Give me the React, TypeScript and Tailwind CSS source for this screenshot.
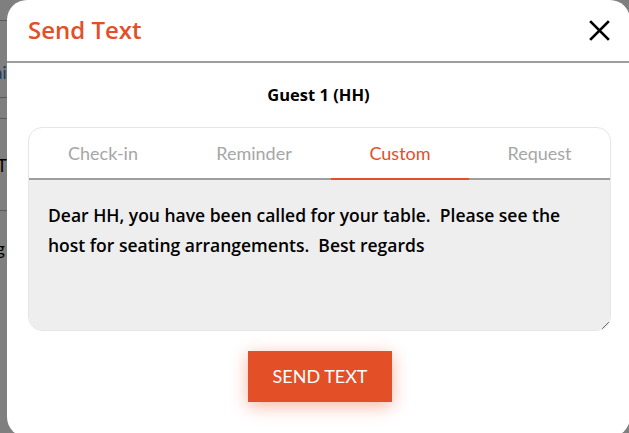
import React from "react";

const msg =
  "Dear HH, you have been called for your table.  Please see the host for seating arrangements.  Best regards";

export default function App() {
  return (
    <div
      className="relative w-[629px] h-[433px] overflow-hidden bg-[#7f7f7f]"
      style={{ fontFamily: "Lato, 'Noto Sans', sans-serif" }}
    >
      {/* background page remnants */}
      <div className="absolute left-0 top-0 w-[8px] h-full">
        <div className="absolute left-0 top-[20px] w-full h-px bg-[#5a5a5a]" />
        <div className="absolute left-0 top-[97px] w-full h-px bg-[#5a5a5a]" />
        <div className="absolute left-0 top-[118px] w-full h-px bg-[#5a5a5a]" />
        <div className="absolute left-0 top-[210px] w-full h-px bg-[#5a5a5a]" />
        <div className="absolute left-[-6px] top-[60px] text-[17px] text-[#1d3a5a]">ai</div>
        <div className="absolute left-[-3px] top-[153px] text-[17px] text-black">T</div>
        <div className="absolute left-[-4px] top-[236px] text-[17px] text-black">g</div>
      </div>

      {/* dialog */}
      <div className="absolute left-[7px] top-0 w-[623px] h-[437px] bg-white rounded-[20px] flex flex-col">
        <div className="h-[63px] shrink-0 flex items-center justify-between pl-[21px] pr-[20px] border-b-2 border-[#9e9e9e]">
          <div
            className="text-[24px] font-semibold text-[#e34f27] leading-none pb-[2px]"
            style={{ fontFamily: "'Open Sans', sans-serif" }}
          >
            Send Text
          </div>
          <svg width="21" height="21" viewBox="0 0 20 20" className="mt-[-1px]">
            <path d="M2 2 L18 18 M18 2 L2 18" stroke="#000" strokeWidth="2.6" strokeLinecap="square" />
          </svg>
        </div>
        <div
          className="pt-[20px] text-center text-[16.5px] font-bold text-black leading-[24px]"
          style={{ fontFamily: "'Open Sans', sans-serif" }}
        >
          Guest 1 (HH)
        </div>
        <div className="mt-[20px] ml-[21px] w-[583px] h-[204px] rounded-[14px] border border-[#e6e6e6] flex flex-col overflow-hidden">
          <div className="flex h-[52px] shrink-0 border-b-2 border-[#9e9e9e] text-[18px] text-[#a6a6a6]">
            <div className="w-[148px] flex items-center justify-center">Check-in</div>
            <div className="w-[154px] flex items-center justify-center">Reminder</div>
            <div className="w-[138px] flex items-center justify-center text-[#e34f27] border-b-2 border-[#e34f27] mb-[-2px]">
              Custom
            </div>
            <div className="w-[141px] flex items-center justify-center">Request</div>
          </div>
          <textarea
            readOnly
            value={msg}
            className="flex-1 w-full bg-[#eeeeee] resize-y outline-none pl-[19px] pr-[20px] pt-[20px] text-[17.5px] font-semibold leading-[30px] text-black"
            style={{ fontFamily: "'Open Sans', sans-serif" }}
          />
        </div>
        <div className="flex justify-center mt-[20px]">
          <button className="w-[144px] h-[51px] bg-[#e34f27] text-white text-[18px] shadow-[0_4px_16px_rgba(240,90,50,0.45)] ml-[3px]">
            SEND TEXT
          </button>
        </div>
      </div>
    </div>
  );
}
